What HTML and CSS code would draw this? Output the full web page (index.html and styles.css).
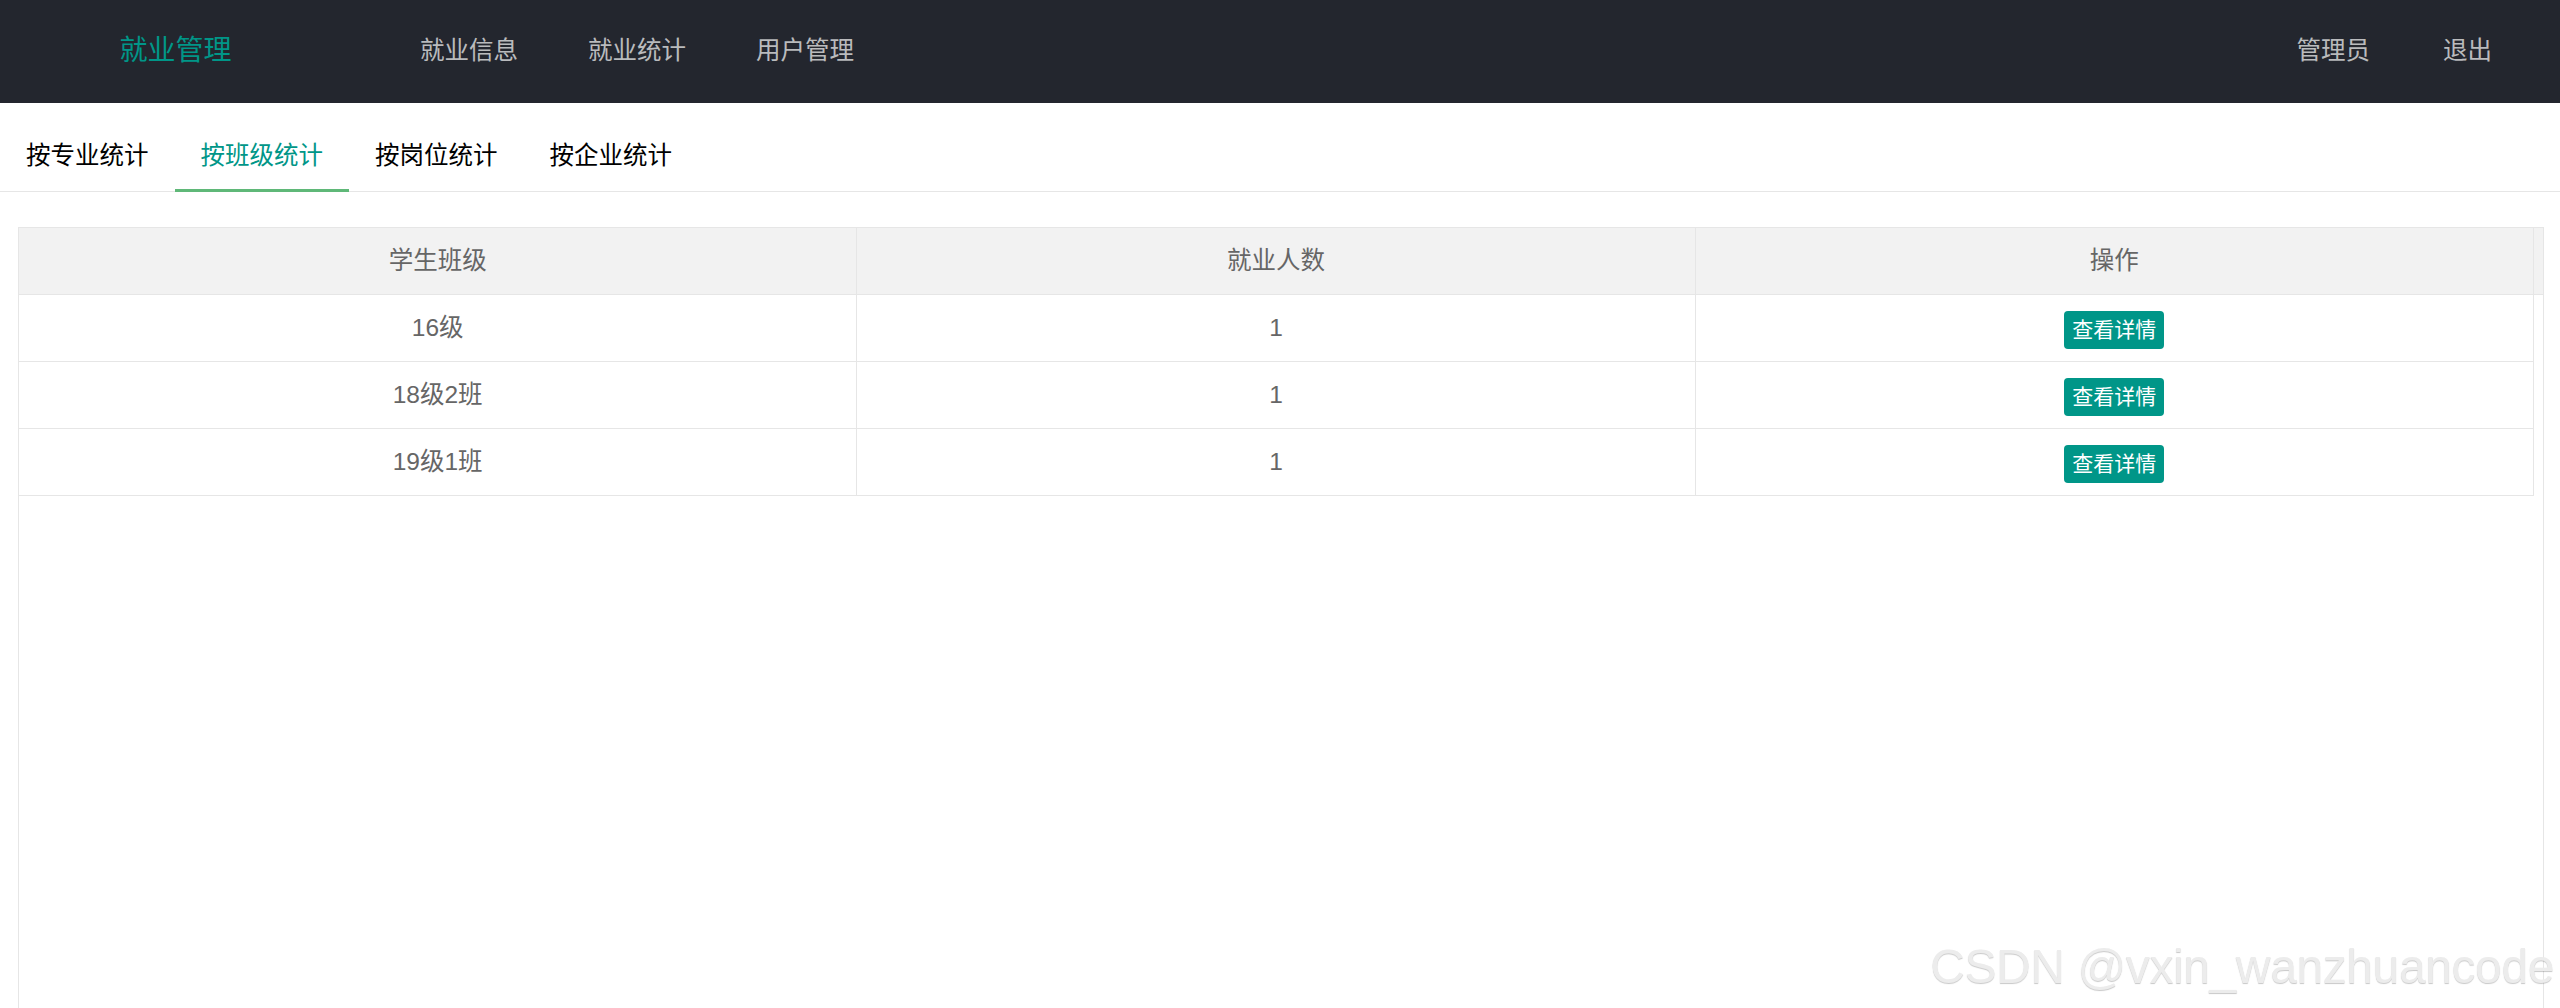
FILE: index.html
```html
<!DOCTYPE html>
<html lang="zh-CN">
<head>
    <meta charset="UTF-8">
    <meta name="viewport" content="width=device-width, initial-scale=1.0">
    <title>就业统计</title>
    <link rel="stylesheet" href="styles.css">
</head>
<body>
    <!-- top bar -->
    <div class="header">
        <div class="logo">就业管理</div>
        <ul class="nav nav-left">
            <li><a href="#">就业信息</a></li>
            <li><a href="#">就业统计</a></li>
            <li><a href="#">用户管理</a></li>
        </ul>
        <ul class="nav nav-right">
            <li><a href="#">管理员</a></li>
            <li><a href="#">退出</a></li>
        </ul>
    </div>

    <!-- tabs -->
    <ul class="tab-title">
        <li>按专业统计</li>
        <li class="this">按班级统计</li>
        <li>按岗位统计</li>
        <li>按企业统计</li>
    </ul>

    <!-- stats table -->
    <div class="table-box">
        <div class="table-head">
            <table>
                <tr>
                    <th>学生班级</th>
                    <th>就业人数</th>
                    <th>操作</th>
                </tr>
            </table>
        </div>
        <div class="table-body">
            <table>
                <tr>
                    <td>16级</td>
                    <td>1</td>
                    <td><a class="btn-xs" href="#">查看详情</a></td>
                </tr>
                <tr>
                    <td>18级2班</td>
                    <td>1</td>
                    <td><a class="btn-xs" href="#">查看详情</a></td>
                </tr>
                <tr>
                    <td>19级1班</td>
                    <td>1</td>
                    <td><a class="btn-xs" href="#">查看详情</a></td>
                </tr>
            </table>
        </div>
    </div>

    <div class="watermark">CSDN @vxin_wanzhuancode</div>
</body>
</html>
```

FILE: styles.css
```css
body {
    margin: 0;
    font-family: "Liberation Sans", "Noto Sans CJK SC", sans-serif;
    background-color: #fff;
    color: #666;
    overflow: hidden;
}

ul {
    list-style: none;
    margin: 0;
    padding: 0;
}

a {
    text-decoration: none;
}

/* header */
.header {
    display: flex;
    height: 103px;
    background-color: #23262e;
}

.logo {
    width: 351px;
    line-height: 101px;
    text-align: center;
    font-size: 28px;
    color: #009688;
}

.nav {
    display: flex;
}

.nav li a {
    display: block;
    padding: 0 35px;
    line-height: 101px;
    font-size: 24.5px;
    color: rgba(255, 255, 255, 0.7);
}

.nav-left {
    padding-left: 34px;
}

.nav-right {
    margin-left: auto;
    padding-right: 33px;
}

.nav-right li + li {
    margin-left: 3px;
}

/* tabs */
.tab-title {
    display: flex;
    height: 68px;
    margin-top: 20px;
    border-bottom: 1px solid #e6e6e6;
}

.tab-title li {
    position: relative;
    padding: 0 26px;
    line-height: 66px;
    font-size: 24.5px;
    color: #000;
    cursor: pointer;
}

.tab-title li.this {
    color: #009688;
}

.tab-title li.this::after {
    content: "";
    position: absolute;
    left: 0;
    right: 0;
    bottom: -1px;
    height: 3px;
    background-color: #5fb878;
}

/* table */
.table-box {
    height: 820px;
    margin: 35px 16px 0 18px;
    border: 1px solid #e6e6e6;
}

.table-box table {
    width: calc(100% - 9px);
    border-collapse: separate;
    border-spacing: 0;
    table-layout: fixed;
}

.table-head {
    background-color: #f2f2f2;
    border-bottom: 1px solid #e6e6e6;
}

.table-box th,
.table-box td {
    padding: 0;
    line-height: 66px;
    text-align: center;
    font-size: 24.5px;
    font-weight: normal;
    color: #666;
    border-right: 1px solid #e6e6e6;
}

.table-box td {
    border-bottom: 1px solid #e6e6e6;
}

.btn-xs {
    display: inline-block;
    height: 38px;
    padding: 0 8px;
    line-height: 38px;
    font-size: 21px;
    color: #fff;
    background-color: #009688;
    border-radius: 4px;
    vertical-align: middle;
}

.watermark {
    position: fixed;
    top: 943px;
    right: 6px;
    font-family: "Liberation Sans", sans-serif;
    font-size: 48px;
    line-height: 1;
    letter-spacing: -0.4px;
    color: #ececec;
    text-shadow: 0 1px 1px rgba(0, 0, 0, 0.22);
    pointer-events: none;
}
```
